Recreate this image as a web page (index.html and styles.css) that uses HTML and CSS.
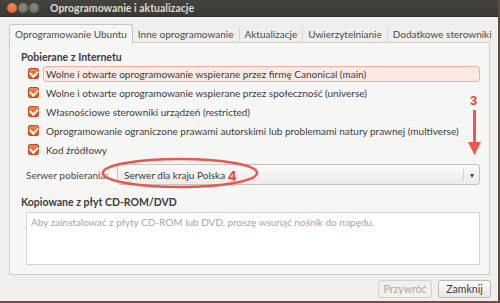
FILE: index.html
```html
<!DOCTYPE html>
<html lang="pl">
<head>
    <meta charset="UTF-8">
    <meta name="viewport" content="width=device-width, initial-scale=1.0">
    <title>Oprogramowanie i aktualizacje</title>
    <link rel="stylesheet" href="styles.css">
</head>
<body>
    <div class="window">
        <div class="titlebar">
            <div class="win-buttons">
                <span class="win-btn close"></span>
                <span class="win-btn"></span>
                <span class="win-btn"></span>
            </div>
            <div class="title">Oprogramowanie i aktualizacje</div>
        </div>

        <div class="content">
            <div class="tabs">
                <div class="tab active">Oprogramowanie Ubuntu</div>
                <div class="tab">Inne oprogramowanie</div>
                <div class="tab">Aktualizacje</div>
                <div class="tab">Uwierzytelnianie</div>
                <div class="tab">Dodatkowe sterowniki</div>
            </div>

            <div class="panel">
                <div class="section-title">Pobierane z Internetu</div>
                <div class="sources">
                    <label class="check-row focused"><span class="checkbox"></span><span class="check-label">Wolne i otwarte oprogramowanie wspierane przez firmę Canonical (main)</span></label>
                    <label class="check-row"><span class="checkbox"></span><span class="check-label">Wolne i otwarte oprogramowanie wspierane przez społeczność (universe)</span></label>
                    <label class="check-row"><span class="checkbox"></span><span class="check-label">Własnościowe sterowniki urządzeń (restricted)</span></label>
                    <label class="check-row"><span class="checkbox"></span><span class="check-label">Oprogramowanie ograniczone prawami autorskimi lub problemami natury prawnej (multiverse)</span></label>
                    <label class="check-row"><span class="checkbox"></span><span class="check-label">Kod źródłowy</span></label>
                </div>

                <div class="server-row">
                    <span class="server-label">Serwer pobierania:</span>
                    <div class="combo">
                        <span class="combo-value">Serwer dla kraju Polska</span>
                        <span class="combo-arrow">&#9662;</span>
                    </div>
                </div>

                <div class="section-title cdrom-title">Kopiowane z płyt CD-ROM/DVD</div>
                <div class="cdrom-box">Aby zainstalować z płyty CD-ROM lub DVD, proszę wsunąć nośnik do napędu.</div>
            </div>

            <div class="actions">
                <button class="btn btn-revert" disabled>Przywróć</button>
                <button class="btn btn-close">Zamknij</button>
            </div>
        </div>

        <!-- annotations drawn over the screenshot -->
        <svg class="annotations" width="500" height="303" viewBox="0 0 500 303">
            <ellipse cx="180" cy="173" rx="77" ry="14" fill="none" stroke="#e9564e" stroke-width="2.5"/>
            <line x1="474.5" y1="110" x2="474.5" y2="143" stroke="#ef564d" stroke-width="3"/>
            <polygon points="468,142 481,142 474.5,155" fill="#ef564d"/>
        </svg>
        <span class="mark mark-3">3</span>
        <span class="mark mark-4">4</span>
    </div>
</body>
</html>
```

FILE: styles.css
```css
/* General */
body {
    margin: 0;
    font-family: 'Lato', 'Liberation Sans', sans-serif;
    font-size: 10px;
    color: #3c3c3c;
    background: #f2f1f0;
}

.window {
    position: relative;
    width: 500px;
    height: 303px;
    display: flex;
    flex-direction: column;
    background: #f0efee;
    box-sizing: border-box;
    border-right: 2px solid #5e4a44;
    border-bottom: 2px solid #7a4b44;
    overflow: hidden;
}

/* Title bar */
.titlebar {
    height: 16px;
    display: flex;
    align-items: center;
    background: linear-gradient(#45433e, #3a3935);
    border-bottom: 1px solid #2c2b28;
}

.win-buttons {
    display: flex;
    gap: 1px;
    margin-left: 7px;
    width: 43px;
}

.win-btn {
    width: 10px;
    height: 10px;
    border-radius: 50%;
    background: radial-gradient(circle at 50% 35%, #8a8883, #66645f);
}

.win-btn.close {
    background: radial-gradient(circle at 50% 35%, #f78a5c, #e5501e);
}

.title {
    color: #dfdbd2;
    font-weight: bold;
    font-size: 10.5px;
}

/* Content */
.content {
    flex: 1;
    display: flex;
    flex-direction: column;
    padding: 7px 9px 0 9px;
}

/* Tabs */
.tabs {
    display: flex;
    align-items: flex-end;
    height: 18px;
}

.tab {
    height: 15px;
    line-height: 15px;
    padding: 0 5px;
    color: #4a4a4a;
    border-right: 1px solid #d9d7d3;
    box-sizing: border-box;
    white-space: nowrap;
}

.tab.active {
    height: 19px;
    line-height: 18px;
    padding: 0 5px;
    background: #f6f6f5;
    border: 1px solid #c8c6c2;
    border-bottom: none;
    border-radius: 3px 3px 0 0;
    margin-bottom: -1px;
    position: relative;
}

.tab:last-child {
    border-right: none;
}

/* Panel */
.panel {
    width: 481px;
    height: 233px;
    box-sizing: border-box;
    background: #f6f6f5;
    border: 1px solid #cfcdca;
    padding: 7px 9px 0 11px;
}

.section-title {
    font-weight: bold;
    font-size: 10.5px;
    line-height: 14px;
}

.sources {
    display: flex;
    flex-direction: column;
    padding-left: 7px;
}

.check-row {
    height: 19px;
    display: flex;
    align-items: center;
}

.checkbox {
    width: 9px;
    height: 9px;
    flex: none;
    border: 1px solid #c44a1b;
    border-radius: 2px;
    background: linear-gradient(#f28455, #de5220);
    position: relative;
    margin-right: 4px;
}

.checkbox::after {
    content: '';
    position: absolute;
    left: 2px;
    top: 0px;
    width: 4px;
    height: 6px;
    border: solid #fff;
    border-width: 0 2px 2px 0;
    transform: rotate(45deg);
}

.check-label {
    padding: 1px 2px;
    border: 1px solid transparent;
    white-space: nowrap;
}

.check-row.focused .check-label {
    flex: 1;
    border-color: #efb1a3;
    background: #fbe9e4;
    border-radius: 3px;
}

/* Server combo */
.server-row {
    display: flex;
    align-items: center;
    margin-top: 5px;
    padding-left: 5px;
}

.server-label {
    width: 91px;
    color: #4a4a4a;
    white-space: nowrap;
}

.combo {
    flex: 1;
    height: 21px;
    box-sizing: border-box;
    display: flex;
    align-items: center;
    border: 1px solid #c4c2be;
    border-radius: 3px;
    background: linear-gradient(#fafaf9, #ecebea);
    padding-left: 6px;
}

.combo-value {
    flex: 1;
}

.combo-arrow {
    width: 15px;
    text-align: center;
    font-size: 8px;
    color: #444;
    border-left: 1px solid #d6d4d0;
    line-height: 14px;
}

.cdrom-title {
    margin-top: 10px;
}

.cdrom-box {
    margin: 3px 0 0 5px;
    height: 53px;
    box-sizing: border-box;
    background: #fff;
    border: 1px solid #d7d5d2;
    padding: 3px 4px;
    color: #a5a5a5;
}

/* Buttons */
.actions {
    display: flex;
    justify-content: flex-end;
    gap: 6px;
    margin-top: 5px;
    margin-right: -2px;
}

.btn {
    height: 18px;
    padding: 0;
    font-family: inherit;
    font-size: 10.5px;
    color: #3c3c3c;
    border: 1px solid #bdbab6;
    border-radius: 3px;
    background: linear-gradient(#fbfbfa, #e8e7e5);
}

.btn-revert {
    width: 54px;
}

.btn-close {
    width: 53px;
}

.btn:disabled {
    color: #aaa9a6;
    border-color: #d3d1ce;
    background: #f1f0ef;
}

/* Annotations */
.annotations {
    position: absolute;
    left: 0;
    top: 0;
    pointer-events: none;
}

.mark {
    position: absolute;
    color: #e8432f;
    font-family: 'Liberation Sans', sans-serif;
    font-weight: bold;
}

.mark-3 {
    left: 470px;
    top: 93px;
    font-size: 13px;
}

.mark-4 {
    left: 228px;
    top: 167px;
    font-size: 15px;
}
```
